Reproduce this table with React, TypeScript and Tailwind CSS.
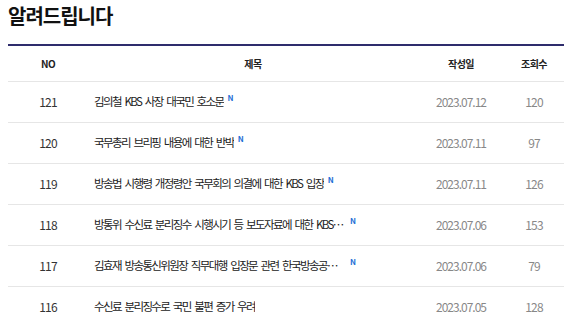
import React from 'react';

interface Notice {
  no: number;
  title: string;
  date: string;
  views: number;
  isNew?: boolean;
}

const notices: Notice[] = [
  { no: 121, title: '김의철 KBS 사장 대국민 호소문', date: '2023.07.12', views: 120, isNew: true },
  { no: 120, title: '국무총리 브리핑 내용에 대한 반박', date: '2023.07.11', views: 97, isNew: true },
  { no: 119, title: '방송법 시행령 개정령안 국무회의 의결에 대한 KBS 입장', date: '2023.07.11', views: 126, isNew: true },
  { no: 118, title: '방통위 수신료 분리징수 시행시기 등 보도자료에 대한 KBS 입장', date: '2023.07.06', views: 153, isNew: true },
  { no: 117, title: '김효재 방송통신위원장 직무대행 입장문 관련 한국방송공사 입장', date: '2023.07.06', views: 79, isNew: true },
  { no: 116, title: '수신료 분리징수로 국민 불편 증가 우려', date: '2023.07.05', views: 128 },
];

const NewBadge = () => (
  <span className="ml-[4px] self-start mt-[12px] text-[8px] leading-none font-bold text-[#1f6fd6] tracking-normal">
    N
  </span>
);

export default function App() {
  return (
    <div
      className="w-[580px] h-[325px] overflow-hidden bg-white text-[#222]"
      style={{ fontFamily: '"Noto Sans CJK KR", "Noto Sans", sans-serif' }}
    >
      <h1 className="ml-2 mt-[2px] text-[20px] leading-[28px] font-bold tracking-[-1px] text-[#111]">
        알려드립니다
      </h1>

      <div className="ml-2 mt-[14px] w-[556px]">
        {/* header */}
        <div className="flex items-center h-[38px] border-t-2 border-[#2e2c6c] border-b border-b-[#e6e6e6] text-[10px] font-bold tracking-[-0.5px] text-[#222]">
          <div className="w-[80px] text-center">NO</div>
          <div className="w-[330px] text-center">제목</div>
          <div className="w-[86px] text-center">작성일</div>
          <div className="w-[60px] text-center">조회수</div>
        </div>

        {notices.map((n) => (
          <div key={n.no} className="flex items-center h-[41px] border-b border-[#e6e6e6] text-[12px]">
            <div className="w-[80px] text-center text-[#333] tracking-[-0.8px]">{n.no}</div>
            <div className="w-[330px] pl-[6px] flex h-full items-center">
              <span className="max-w-[252px] truncate text-[11.5px] tracking-[-1.6px] [word-spacing:2.5px] text-[#222]">
                {n.title}
              </span>
              {n.isNew && <NewBadge />}
            </div>
            <div className="w-[86px] text-center text-[#888] tracking-[-1px]">{n.date}</div>
            <div className="w-[60px] text-center text-[#888] tracking-[-0.8px]">{n.views}</div>
          </div>
        ))}
      </div>
    </div>
  );
}
